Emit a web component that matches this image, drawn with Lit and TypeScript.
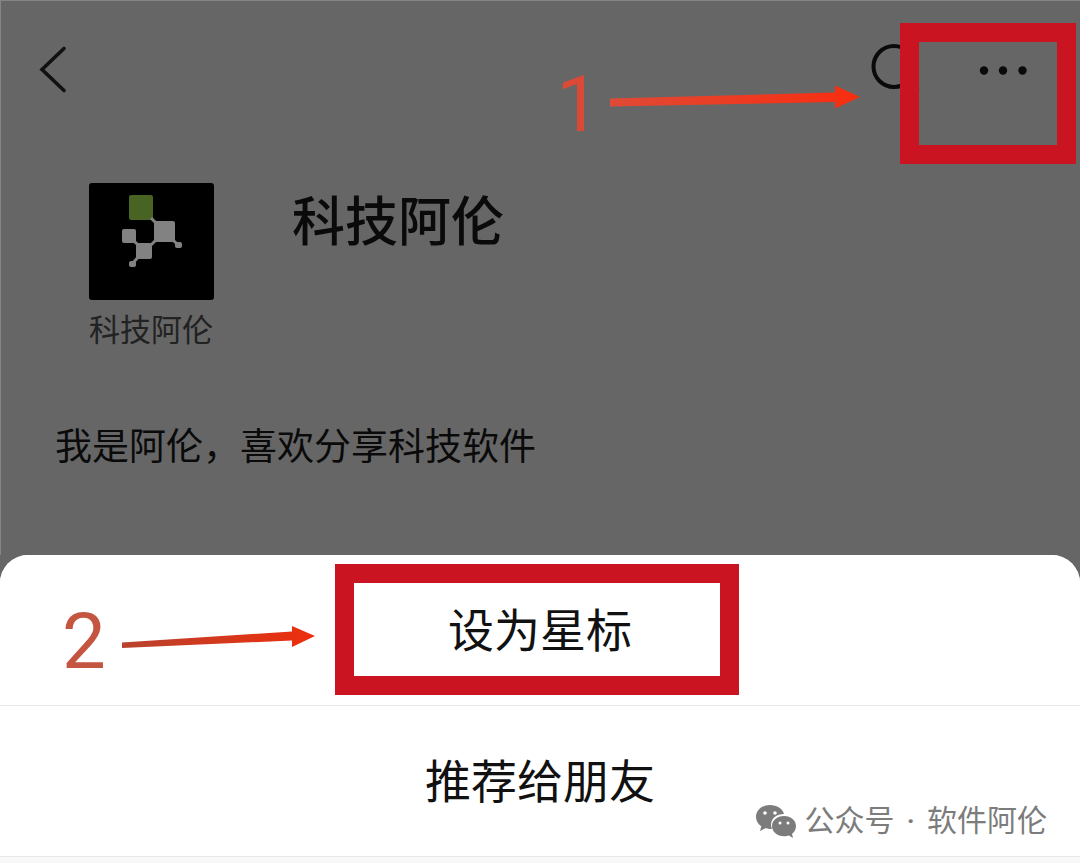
import { LitElement, html, css } from "lit";
import { customElement } from "lit/decorators.js";

@customElement("app-root")
export class AppRoot extends LitElement {
  static styles = css`
    :host {
      display: flex;
      flex-direction: column;
      min-height: 100vh;
      background: #666;
      color: #111;
      font-family: "Noto Sans CJK SC", "Noto Sans", sans-serif;
      position: relative;
      overflow: hidden;
    }
    * {
      box-sizing: border-box;
    }
    button {
      appearance: none;
      border: 0;
      margin: 0;
      padding: 0;
      background: none;
      color: inherit;
      font: inherit;
      cursor: pointer;
    }
    svg {
      display: block;
    }
    .page {
      display: flex;
      flex-direction: column;
      border-top: 1px solid #858585;
      border-left: 1px solid #858585;
      padding-bottom: 81px;
      color: #0a0a0a;
    }
    .bar {
      display: flex;
      align-items: center;
      height: 138px;
      padding: 0 50px 0 36px;
      position: relative;
    }
    .actions {
      display: flex;
      align-items: center;
      gap: 54px;
      margin-left: auto;
    }
    .profile {
      display: flex;
      gap: 78px;
      padding: 44px 48px 0 88px;
    }
    .brand {
      display: flex;
      flex-direction: column;
      align-items: flex-start;
      margin: 0;
      gap: 6px;
    }
    .caption {
      font-size: 31px;
      line-height: 44px;
      color: #222;
    }
    .name {
      margin: 0;
      font-size: 53px;
      font-weight: 500;
      line-height: 70px;
    }
    .intro {
      margin: 0;
      padding: 64px 54px 0;
      font-size: 37px;
      line-height: 60px;
    }
    .sheet {
      flex: 1;
      display: flex;
      flex-direction: column;
      background: #f8f8f8;
      border-radius: 28px 28px 0 0;
      overflow: hidden;
      position: relative;
    }
    .choice {
      display: flex;
      align-items: center;
      justify-content: center;
      height: 151px;
      padding-bottom: 6px;
      background: #fff;
      border-bottom: 1px solid #e8e8e8;
      font-size: 46px;
      line-height: 68px;
      position: relative;
    }
    .frame {
      position: absolute;
      border: 19px solid #cb1422;
      pointer-events: none;
    }
    .frame-more {
      top: 22px;
      right: 4px;
      width: 176px;
      height: 141px;
    }
    .frame-star {
      inset: 9px 341px 10px 335px;
    }
    .step {
      position: absolute;
      display: flex;
      align-items: center;
      pointer-events: none;
      font-family: Roboto, sans-serif;
      font-size: 78px;
      line-height: 80px;
    }
    .step-one {
      top: 64px;
      right: 220px;
      gap: 8px;
      color: #db4a36;
    }
    .step-two {
      top: 47px;
      left: 62px;
      gap: 14px;
      color: #c45540;
    }
    .source {
      position: absolute;
      right: 33px;
      top: 241px;
      display: flex;
      align-items: center;
      gap: 8px;
      font-size: 30px;
      line-height: 44px;
      color: #7c7c7c;
    }
    .label {
      display: flex;
      align-items: baseline;
      gap: 12px;
    }
    .dot {
      font-family: Roboto, sans-serif;
      font-weight: 500;
    }
  `;

  render() {
    return html`
      <main class="page">
        <header class="bar">
          <button aria-label="返回">
            <svg width="32" height="50" viewBox="0 0 32 50" fill="none" stroke="#111" stroke-width="3.6">
              <path d="M27 3.500 5 24.500l22 21" stroke-linecap="round" />
            </svg>
          </button>
          <div class="actions">
            <button aria-label="搜索">
              <svg width="56" height="56" viewBox="0 0 56 56" fill="none" stroke="#0a0a0a" stroke-width="4">
                <circle cx="26" cy="24.500" r="20.500" />
                <path d="m40.500 39.500 9.500 9" />
              </svg>
            </button>
            <button aria-label="更多">
              <svg width="52" height="20" viewBox="0 0 52 20" fill="#0a0a0a">
                <circle cx="6" cy="10.500" r="4.200" />
                <circle cx="25" cy="10.500" r="4.200" />
                <circle cx="44.500" cy="10.500" r="4.200" />
              </svg>
            </button>
          </div>
          <div class="frame frame-more"></div>
          <div class="step step-one">
            <span>1</span>
            <svg width="252" height="48" viewBox="0 0 252 48">
              <defs>
                <linearGradient id="g1">
                  <stop offset="0" stop-color="#df4a35" />
                  <stop offset="1" stop-color="#f82d10" />
                </linearGradient>
              </defs>
              <path fill="url(#g1)" d="M2 17.500 227 11.500V4.500l25 11.500-25 11.500V21L2 25.500z" />
            </svg>
          </div>
        </header>
        <section class="profile">
          <figure class="brand">
            <svg width="125" height="117" viewBox="0 0 125 117">
              <rect width="125" height="117" rx="3" fill="#000" />
              <rect x="40" y="12" width="24" height="25" rx="2" fill="#496322" />
              <g fill="#828282">
                <rect x="65" y="38" width="21" height="21" rx="2" />
                <rect x="33" y="46" width="14" height="14" rx="2" />
                <rect x="47" y="60" width="16" height="16" rx="2" />
                <rect x="86" y="59" width="7" height="6" rx="2" />
                <rect x="40" y="78" width="7" height="6" rx="2" />
              </g>
              <path d="m62 35 5 5M84 57l5 5M67 57l-6 6M45 58l4 4M50 73l-6 7" stroke="#828282" stroke-width="3" />
            </svg>
            <figcaption class="caption">科技阿伦</figcaption>
          </figure>
          <h1 class="name">科技阿伦</h1>
        </section>
        <p class="intro">我是阿伦，喜欢分享科技软件</p>
      </main>
      <section class="sheet">
        <button class="choice">
          设为星标
          <span class="frame frame-star"></span>
        </button>
        <button class="choice">推荐给朋友</button>
        <div class="step step-two">
          <span>2</span>
          <svg width="196" height="32" viewBox="0 0 196 32">
            <defs>
              <linearGradient id="g2">
                <stop offset="0" stop-color="#b8432e" />
                <stop offset="1" stop-color="#ee2e0c" />
              </linearGradient>
            </defs>
            <path fill="url(#g2)" d="M2 16.500 172 5.500V0l23 10-23 11V14.500L2 22z" />
          </svg>
        </div>
        <div class="source">
          <svg width="42" height="40" viewBox="0 -4 42 40" fill="#7c7c7c">
            <path d="M15 1C7 1 1 6.400 1 13c0 4 2 7 5.300 9.200L5 27l5.300-2.800c2 .6 4 .8 6.700.8A12 12 0 0 1 16 21c0-6.600 5.600-11 13-11C27.500 4.500 22 1 15 1z" />
            <path d="M29 12c-7 0-12 4.500-12 10s5 10.300 12 10.300c2 0 3.500-.3 5-.8l4 2.500-1-4c2.600-2 4-4.800 4-8 0-5.500-5-10-12-10z" />
            <g fill="#fff">
              <circle cx="10" cy="9" r="1.800" />
              <circle cx="20" cy="9" r="1.800" />
              <circle cx="25" cy="19" r="1.500" />
              <circle cx="33" cy="19" r="1.500" />
            </g>
          </svg>
          <span class="label">
            <span>公众号</span>
            <span class="dot">·</span>
            <span>软件阿伦</span>
          </span>
        </div>
      </section>
    `;
  }
}
